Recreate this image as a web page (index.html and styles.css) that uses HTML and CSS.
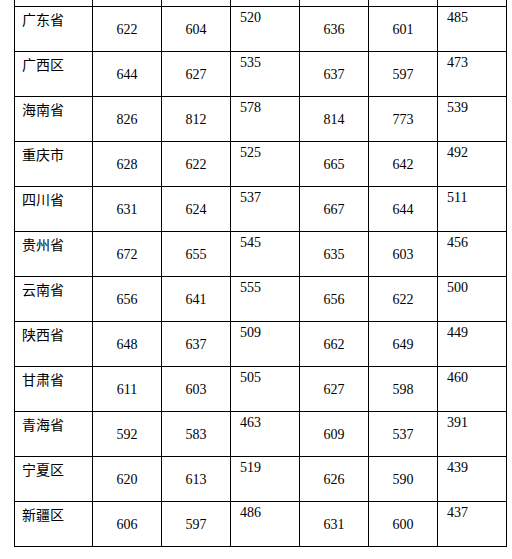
FILE: index.html
```html
<!DOCTYPE html>
<html lang="zh">
<head>
<meta charset="utf-8">
<title>分数线</title>
<link rel="stylesheet" href="styles.css">
</head>
<body>
<div class="page">
<table class="scores">
<colgroup>
<col class="c-name"><col class="c-num"><col class="c-num"><col class="c-num"><col class="c-num"><col class="c-num"><col class="c-num">
</colgroup>
<tbody>
<tr class="stub"><td></td><td></td><td></td><td></td><td></td><td></td><td></td></tr>
<tr><td class="name">广东省</td><td class="mid">622</td><td class="mid">604</td><td class="top">520</td><td class="mid">636</td><td class="mid">601</td><td class="top">485</td></tr>
<tr><td class="name">广西区</td><td class="mid">644</td><td class="mid">627</td><td class="top">535</td><td class="mid">637</td><td class="mid">597</td><td class="top">473</td></tr>
<tr><td class="name">海南省</td><td class="mid">826</td><td class="mid">812</td><td class="top">578</td><td class="mid">814</td><td class="mid">773</td><td class="top">539</td></tr>
<tr><td class="name">重庆市</td><td class="mid">628</td><td class="mid">622</td><td class="top">525</td><td class="mid">665</td><td class="mid">642</td><td class="top">492</td></tr>
<tr><td class="name">四川省</td><td class="mid">631</td><td class="mid">624</td><td class="top">537</td><td class="mid">667</td><td class="mid">644</td><td class="top">511</td></tr>
<tr><td class="name">贵州省</td><td class="mid">672</td><td class="mid">655</td><td class="top">545</td><td class="mid">635</td><td class="mid">603</td><td class="top">456</td></tr>
<tr><td class="name">云南省</td><td class="mid">656</td><td class="mid">641</td><td class="top">555</td><td class="mid">656</td><td class="mid">622</td><td class="top">500</td></tr>
<tr><td class="name">陕西省</td><td class="mid">648</td><td class="mid">637</td><td class="top">509</td><td class="mid">662</td><td class="mid">649</td><td class="top">449</td></tr>
<tr><td class="name">甘肃省</td><td class="mid">611</td><td class="mid">603</td><td class="top">505</td><td class="mid">627</td><td class="mid">598</td><td class="top">460</td></tr>
<tr><td class="name">青海省</td><td class="mid">592</td><td class="mid">583</td><td class="top">463</td><td class="mid">609</td><td class="mid">537</td><td class="top">391</td></tr>
<tr><td class="name">宁夏区</td><td class="mid">620</td><td class="mid">613</td><td class="top">519</td><td class="mid">626</td><td class="mid">590</td><td class="top">439</td></tr>
<tr><td class="name">新疆区</td><td class="mid">606</td><td class="mid">597</td><td class="top">486</td><td class="mid">631</td><td class="mid">600</td><td class="top">437</td></tr>
</tbody>
</table>
</div>
</body>
</html>
```
FILE: styles.css
```css
html, body {
  margin: 0;
  padding: 0;
  background: #fff;
}
.page {
  padding-left: 14px;
  overflow: hidden;
  height: 559px;
}
.scores {
  border-collapse: collapse;
  table-layout: fixed;
  width: 493px;
  margin-top: -39px;
  color: #000;
}
.c-name { width: 78px; }
.c-num { width: 69px; }
.scores td {
  border: 1px solid #000;
  height: 45px;
  box-sizing: border-box;
  padding: 0;
  font-family: "Liberation Serif", "Times New Roman", serif;
  font-size: 14px;
  line-height: 20px;
}
.scores td.name {
  vertical-align: top;
  padding: 2px 0 0 7px;
  font-family: "Noto Sans CJK SC", "Noto Sans", sans-serif;
}
.scores td.top {
  vertical-align: top;
  padding: 1px 0 0 9px;
}
.scores td.mid {
  vertical-align: middle;
  text-align: center;
  padding-top: 1px;
}
```
